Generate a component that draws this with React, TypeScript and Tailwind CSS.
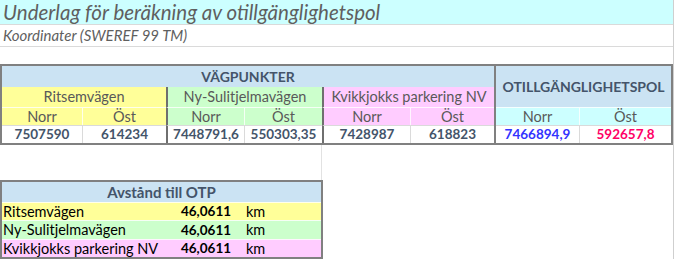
const font = { fontFamily: 'Lato, "Open Sans", sans-serif' };

const Cell = ({ className = '', children }: { className?: string; children?: React.ReactNode }) => (
    <div className={`flex items-center justify-center ${className}`}>{children}</div>
);

export default function App() {
    return (
        <div className="w-[675px] h-[259px] bg-white overflow-hidden text-[14.5px]" style={font}>
            <div className="w-[674px] h-[259px] border-r border-[#cfcfcf] flex flex-col">
                {/* title */}
                <div className="h-[25px] shrink-0 bg-[#ccffff] border-b border-[#dadada] flex items-center pl-[3px]">
                    <span className="italic text-[20.5px] text-[#5f5f5f] leading-none">
                        Underlag för beräkning av otillgänglighetspol
                    </span>
                </div>
                <div className="h-[22px] shrink-0 border-b border-[#dadada] flex items-center pl-[3px]">
                    <span className="italic text-[15px] text-[#5f5f5f] leading-none">Koordinater (SWEREF 99 TM)</span>
                </div>
                <div className="h-[17px] shrink-0" />

                {/* coordinates table */}
                <div className="flex shrink-0 h-[81px]">
                    <div className="w-[494px] border-2 border-r-0 border-[#808080] grid grid-cols-[80px_84px_78px_78px_88px_84px] grid-rows-[21px_20px_18px_18px]">
                        <Cell className="col-span-6 bg-[#cbe3f3] font-bold text-[14px] text-[#44546a]">VÄGPUNKTER</Cell>
                        <Cell className="col-span-2 bg-[#ffff99] text-[#595959]">Ritsemvägen</Cell>
                        <Cell className="col-span-2 bg-[#ccffcc] text-[#595959] border-l-2 border-[#6f6f6f]">Ny-Sulitjelmavägen</Cell>
                        <Cell className="col-span-2 bg-[#ffccff] text-[#595959] border-l-2 border-[#6f6f6f]">Kvikkjokks parkering NV</Cell>

                        <Cell className="bg-[#ffff99] text-[#595959] border-t border-white/80">Norr</Cell>
                        <Cell className="bg-[#ffff99] text-[#595959] border-t border-l border-white/80">Öst</Cell>
                        <Cell className="bg-[#ccffcc] text-[#595959] border-t border-white/80 border-l-2 border-l-[#6f6f6f]">Norr</Cell>
                        <Cell className="bg-[#ccffcc] text-[#595959] border-t border-l border-white/80">Öst</Cell>
                        <Cell className="bg-[#ffccff] text-[#595959] border-t border-white/80 border-l-2 border-l-[#6f6f6f]">Norr</Cell>
                        <Cell className="bg-[#ffccff] text-[#595959] border-t border-l border-white/80">Öst</Cell>

                        <Cell className="font-bold text-[13.5px] text-[#44546a] border-t border-[#dadada]">7507590</Cell>
                        <Cell className="font-bold text-[13.5px] text-[#44546a] border-t border-l border-[#dadada]">614234</Cell>
                        <Cell className="font-bold text-[13.5px] text-[#44546a] border-t border-[#dadada] border-l-2 border-l-[#6f6f6f]">7448791,6</Cell>
                        <Cell className="font-bold text-[13.5px] text-[#44546a] border-t border-l border-[#dadada]">550303,35</Cell>
                        <Cell className="font-bold text-[13.5px] text-[#44546a] border-t border-[#dadada] border-l-2 border-l-[#6f6f6f]">7428987</Cell>
                        <Cell className="font-bold text-[13.5px] text-[#44546a] border-t border-l border-[#dadada]">618823</Cell>
                    </div>
                    <div className="w-[179px] border-2 border-[#808080] grid grid-cols-[83px_92px] grid-rows-[41px_18px_18px]">
                        <Cell className="col-span-2 bg-[#cbe3f3] font-bold text-[14px] text-[#44546a]">OTILLGÄNGLIGHETSPOL</Cell>
                        <Cell className="bg-[#ccffff] text-[#595959] border-t border-white/80">Norr</Cell>
                        <Cell className="bg-[#ccffff] text-[#595959] border-t border-l border-white/80">Öst</Cell>
                        <Cell className="font-bold text-[13.5px] text-[#3333ff] border-t border-[#dadada]">7466894,9</Cell>
                        <Cell className="font-bold text-[13.5px] text-[#ff0066] border-t border-l border-[#dadada]">592657,8</Cell>
                    </div>
                </div>

                <div className="h-[35px] shrink-0 flex">
                    <div className="w-[322px] border-r border-[#e2e2e2]" />
                </div>

                {/* distance table */}
                <div className="w-[323px] shrink-0 border-2 border-[#808080] grid grid-cols-[164px_78px_77px] grid-rows-[20px_18px_19px_18px]">
                    <Cell className="col-span-3 bg-[#cbe3f3] font-bold text-[15px] text-[#44546a]">Avstånd till OTP</Cell>

                    <div className="bg-[#ffff99] flex items-center pl-[1px] text-black border-t border-white/80">Ritsemvägen</div>
                    <Cell className="bg-[#ffff99] font-bold text-[13.5px] text-black border-t border-white/80 pl-[2px]">46,0611</Cell>
                    <div className="bg-[#ffff99] flex items-center pl-[2px] text-black border-t border-white/80">km</div>

                    <div className="bg-[#ccffcc] flex items-center pl-[1px] text-black border-t border-white/80">Ny-Sulitjelmavägen</div>
                    <Cell className="bg-[#ccffcc] font-bold text-[13.5px] text-black border-t border-white/80 pl-[2px]">46,0611</Cell>
                    <div className="bg-[#ccffcc] flex items-center pl-[2px] text-black border-t border-white/80">km</div>

                    <div className="bg-[#ffccff] flex items-center pl-[1px] text-black border-t border-white/80">Kvikkjokks parkering NV</div>
                    <Cell className="bg-[#ffccff] font-bold text-[13.5px] text-black border-t border-white/80 pl-[2px]">46,0611</Cell>
                    <div className="bg-[#ffccff] flex items-center pl-[2px] text-black border-t border-white/80">km</div>
                </div>
                <div className="border-t border-[#dcdcdc]" />
            </div>
        </div>
    );
}
